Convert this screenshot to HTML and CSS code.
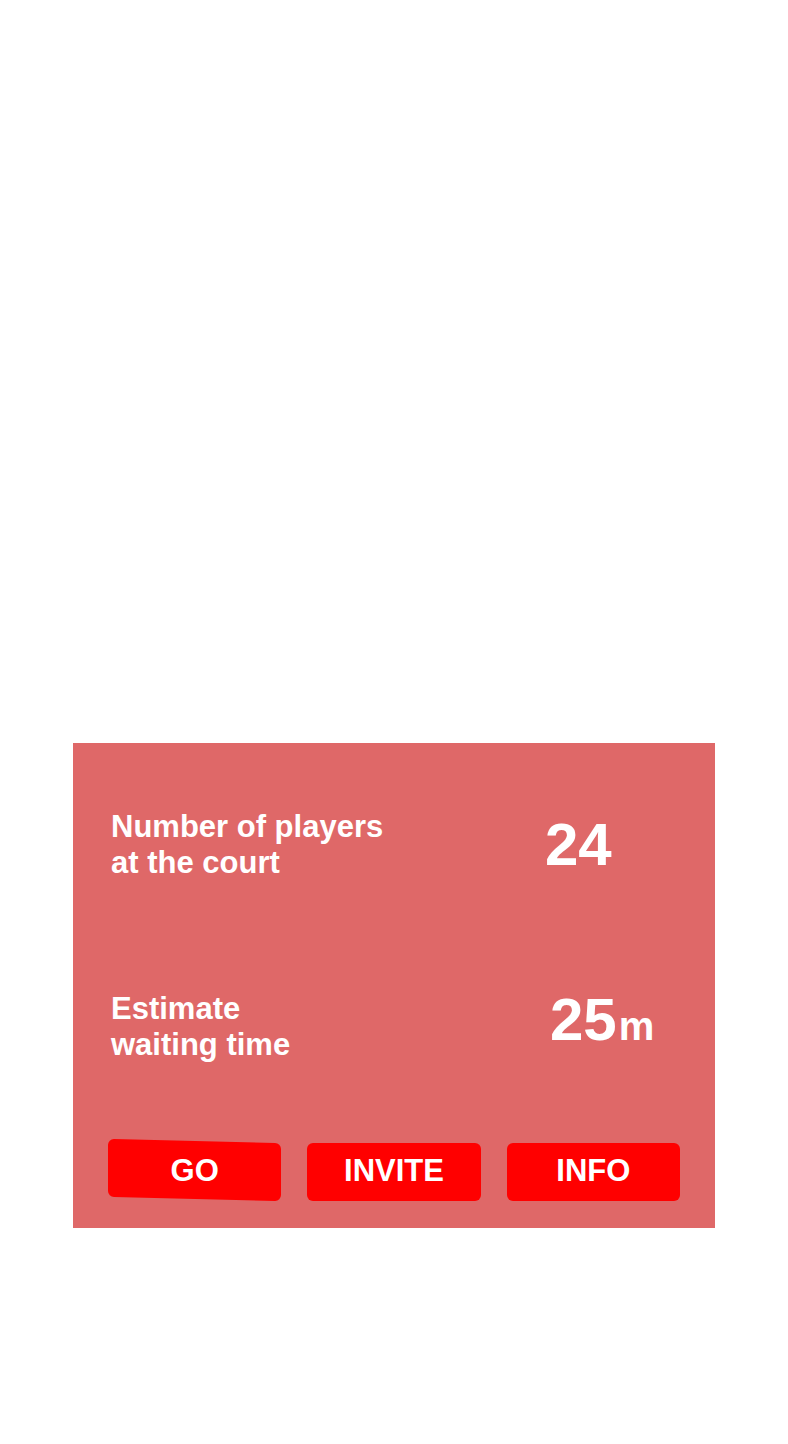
FILE: index.html
```html
<!DOCTYPE html>
<html lang="en">
<head>
<meta charset="utf-8">
<meta name="viewport" content="width=device-width, initial-scale=1">
<title>Court status</title>
<link rel="stylesheet" href="styles.css">
</head>
<body>
<main class="card">
  <dl class="stats">
    <div class="stat stat-players">
      <dt class="label">Number of players<br>at the court</dt>
      <dd class="value">24</dd>
    </div>
    <div class="stat stat-wait">
      <dt class="label">Estimate<br>waiting time</dt>
      <dd class="value">25<span class="unit">m</span></dd>
    </div>
  </dl>
  <div class="actions">
    <button class="action action-go" type="button">GO</button>
    <button class="action" type="button">INVITE</button>
    <button class="action" type="button">INFO</button>
  </div>
</main>
</body>
</html>
```

FILE: styles.css
```css
* {
  box-sizing: border-box;
}

body {
  margin: 0;
  padding: 743px 73px 64px;
  background: #fff;
  color: #fff;
  font-family: "Liberation Sans", Arial, sans-serif;
  font-weight: 700;
}

.card {
  padding: 66px 35px 27px;
  background: #df6868;
}

.stats {
  display: grid;
  gap: 110px;
  margin: 0 0 80px;
}

.stat {
  display: flex;
  justify-content: space-between;
}

.stat-players {
  align-items: center;
}

.stat-wait {
  align-items: flex-start;
}

.label {
  padding-left: 3px;
  font-size: 31px;
  line-height: 36px;
}

.value {
  width: 135px;
  margin: 0;
  font-size: 60px;
  line-height: 58px;
  white-space: nowrap;
}

.stat-wait .value {
  width: 130px;
}

.unit {
  margin-left: 2px;
  font-size: 40px;
  line-height: 40px;
}

.actions {
  display: grid;
  grid-template-columns: repeat(3, 1fr);
  gap: 26px;
}

.action {
  height: 58px;
  padding: 0 0 2px;
  border: 0;
  border-radius: 6px;
  background: #f00;
  color: inherit;
  font: inherit;
  font-size: 31px;
  line-height: 36px;
  cursor: pointer;
}

/* Slanted plate behind a level caption */
.action-go {
  position: relative;
  z-index: 0;
  background: none;
}

.action-go::before {
  content: "";
  position: absolute;
  inset: -2px 0 2px;
  z-index: -1;
  border-radius: 6px;
  background: #f00;
  transform: skewY(1.4deg);
}
```
